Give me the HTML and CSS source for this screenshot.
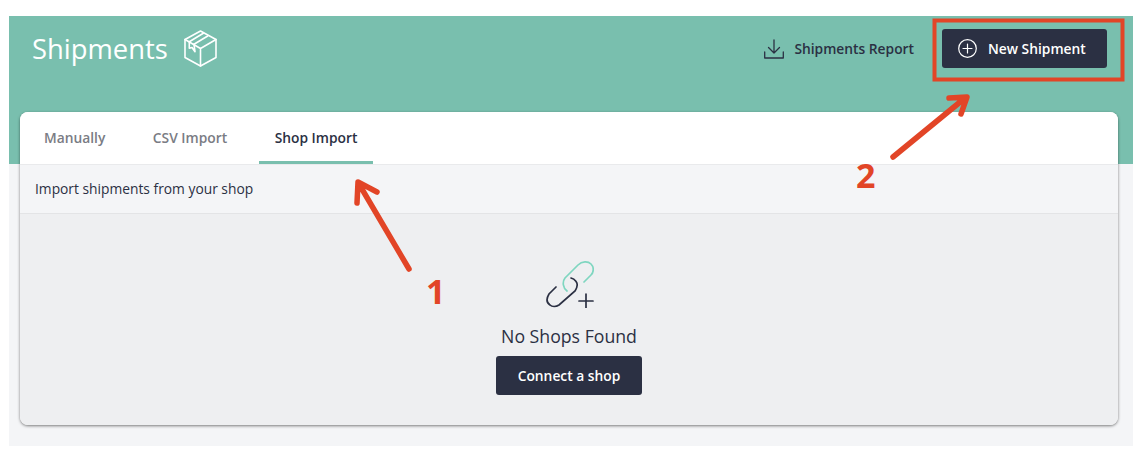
FILE: index.html
```html
<!DOCTYPE html>
<html lang="en">
<head>
<meta charset="utf-8">
<title>Shipments</title>
<link rel="stylesheet" href="styles.css">
</head>
<body>
<div class="page">
  <header class="hero">
    <div class="title-wrap">
      <h1 class="title">Shipments</h1>
      <svg class="box-icon" width="33" height="37" viewBox="0 0 33 37" fill="none" stroke="#fff" stroke-width="1.600" stroke-linejoin="round" stroke-linecap="round">
        <path d="M16.500 1 32 9.500V27.500L16.500 36 1 27.500V9.500Z"/>
        <path d="M1 9.500 16.500 18.500 32 9.500M16.500 18.500V36"/>
        <path d="M5.300 11.700 19.300 3.300M10 14.300 23.700 6"/>
        <path d="M5.300 11.700V18.300L8 17.500 11 21.700 10 14.300"/>
      </svg>
    </div>
    <div class="actions">
      <a class="report">
        <svg width="20" height="20" viewBox="0 0 20 20" fill="none" stroke="#2b3043" stroke-width="1.300" stroke-linecap="round" stroke-linejoin="round">
          <path d="M10 1V14M4.500 8.500 10 14 15.500 8.500M0.700 13V19H19.300V13"/>
        </svg>
        <span>Shipments Report</span>
      </a>
      <button class="btn btn-new">
        <svg width="19" height="19" viewBox="0 0 19 19" fill="none" stroke="#fff" stroke-width="1.200" stroke-linecap="round">
          <circle cx="9.500" cy="9.500" r="8.800"/>
          <path d="M9.500 5V14M5 9.500H14"/>
        </svg>
        <span>New Shipment</span>
      </button>
    </div>
  </header>

  <main class="card">
    <nav class="tabs">
      <a class="tab">Manually</a>
      <a class="tab">CSV Import</a>
      <a class="tab tab-active">Shop Import</a>
    </nav>
    <div class="subhead">Import shipments from your shop</div>
    <section class="empty">
      <svg class="link-icon" width="48" height="47" viewBox="0 0 48 47" fill="none" stroke-width="1.700" stroke-linecap="round">
        <path stroke="#7fd6c0" d="M21 30C17 27 16 21 19 17L32 4C36 0 42 0 45 3C48 6 48 11 45 14L38 21"/>
        <path stroke="#2b3043" d="M25 17C29 18 32 22 31 25C31 27 30 28 29 30L13 44C10 46 6 46 4 44C1 42 0 38 3 33L10 26"/>
        <path stroke="#2b3043" d="M40 33V47M33 40H47"/>
      </svg>
      <p class="empty-text">No Shops Found</p>
      <button class="btn btn-connect">Connect a shop</button>
    </section>
  </main>

  <svg class="annot" width="1142" height="458" viewBox="0 0 1142 458" fill="none" stroke="#e24527" stroke-linecap="round" stroke-linejoin="round">
    <rect x="934.500" y="20.500" width="188" height="59" stroke-width="4" stroke-linejoin="miter"/>
    <path stroke-width="5.500" d="M409 269 359 184M357 203 358 182 377 192"/>
    <path stroke-width="5.500" d="M893 157 965 98M949 98 967 97 961 114"/>
  </svg>
  <span class="num num-1">1</span>
  <span class="num num-2">2</span>
</div>
</body>
</html>
```

FILE: styles.css
```css
* { box-sizing: border-box; }

html, body { margin: 0; background: #fff; }

body {
  padding: 16px 9px 12px;
  font-family: "Open Sans", "Liberation Sans", sans-serif;
  color: #2b3043;
}

.page {
  background: #f4f5f7;
  height: 430px;
}

.hero {
  background: #79bfae;
  height: 148px;
  padding: 13px 26px 0 23px;
  display: flex;
  justify-content: space-between;
  align-items: flex-start;
}

.title-wrap {
  display: flex;
  align-items: center;
  gap: 16px;
  height: 39px;
}

.title {
  margin: 0;
  font-size: 27.400px;
  font-weight: 400;
  line-height: 39px;
  color: #fff;
}

.box-icon { display: block; }

.actions {
  display: flex;
  align-items: center;
  gap: 28px;
}

.report {
  display: flex;
  align-items: center;
  gap: 10px;
  font-size: 13.800px;
  font-weight: 600;
  color: #2b3043;
}

.btn {
  border: 0;
  border-radius: 3px;
  background: #2b3043;
  color: #fff;
  font-family: inherit;
  font-size: 13.800px;
  font-weight: 600;
  display: flex;
  align-items: center;
  justify-content: center;
}

.btn-new {
  width: 165px;
  height: 39px;
  gap: 11px;
  padding: 0;
  justify-content: flex-start;
  padding-left: 16px;
}

.card {
  margin: -52px 15px 0 11px;
  height: 313px;
  border-radius: 8px;
  overflow: hidden;
  background: #fff;
  box-shadow: 0 1px 3px rgba(0, 0, 0, 0.5);
  display: flex;
  flex-direction: column;
}

.tabs {
  height: 52px;
  flex: none;
  display: flex;
  padding-left: 8px;
  gap: 15.500px;
  background: #fff;
}

.tab {
  padding: 1px 16px 0;
  height: 52px;
  display: flex;
  align-items: center;
  font-size: 13.800px;
  font-weight: 600;
  color: #7a7c84;
  border-bottom: 3px solid transparent;
}

.tab-active {
  color: #2b3043;
  border-bottom-color: #79bfae;
}

.subhead {
  height: 50px;
  flex: none;
  display: flex;
  align-items: center;
  padding: 0 0 2px 15px;
  font-size: 13.800px;
  color: #2b3043;
  background: #f4f5f7;
  border-top: 1px solid #e9eaec;
  border-bottom: 1px solid #e3e4e6;
}

.empty {
  flex: 1;
  background: #eeeff1;
  display: flex;
  flex-direction: column;
  align-items: center;
  padding-top: 47px;
}

.link-icon { display: block; margin-left: 2px; }

.empty-text {
  margin: 15px 0 7px;
  font-size: 17.700px;
  line-height: 26px;
  color: #2b3043;
}

.btn-connect {
  width: 146px;
  height: 39px;
}

.annot {
  position: absolute;
  left: 0;
  top: 0;
  pointer-events: none;
}

.num {
  position: absolute;
  font-family: "Open Sans", sans-serif;
  font-size: 34px;
  font-weight: 700;
  line-height: 40px;
  color: #e24527;
}

.num-1 { left: 426px; top: 271px; }
.num-2 { left: 856px; top: 155px; }
```
